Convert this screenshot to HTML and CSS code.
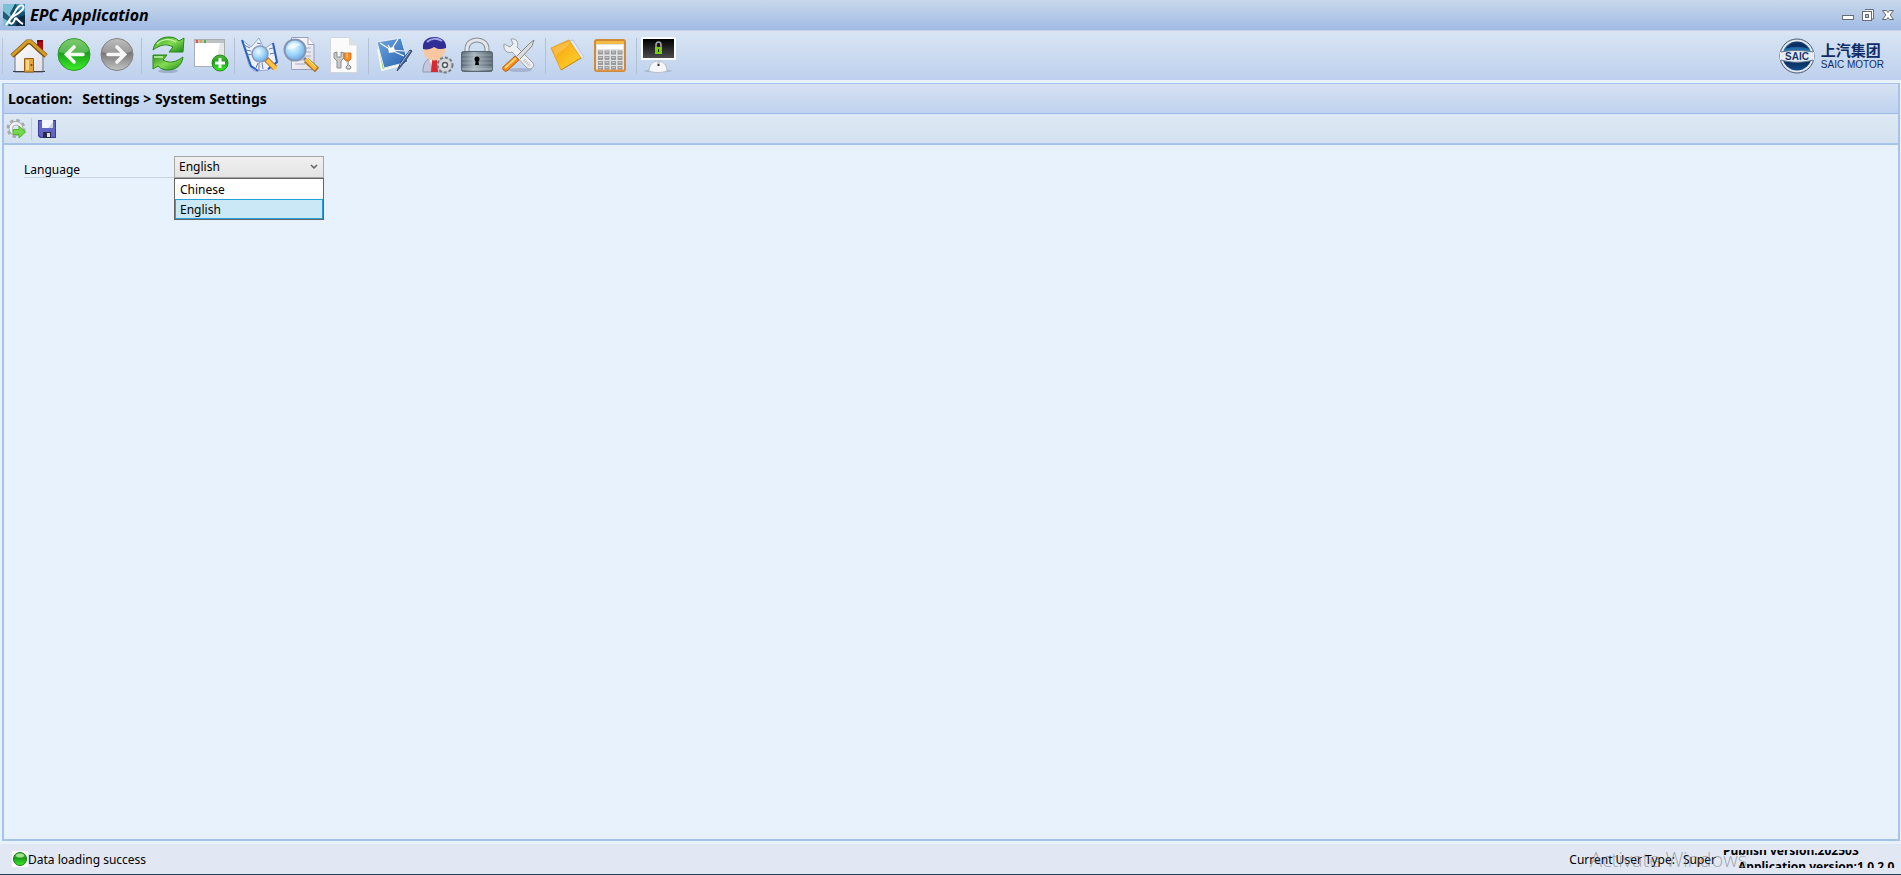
FILE: index.html
```html
<!DOCTYPE html>
<html lang="en">
<head>
  <meta charset="UTF-8" />
  <meta name="viewport" content="width=device-width, initial-scale=1.0"/>
  <title>EPC Application</title>
  <link rel="stylesheet" href="styles.css">
</head>
<body>
  <!-- shared gradients -->
  <svg class="defs" width="0" height="0" aria-hidden="true">
    <defs>
      <linearGradient id="green" x1="0" y1="0" x2="0" y2="1"><stop offset="0" stop-color="#58b83c"/><stop offset=".45" stop-color="#18a018"/><stop offset="1" stop-color="#3cf028"/></linearGradient>
      <linearGradient id="gray" x1="0" y1="0" x2="0" y2="1"><stop offset="0" stop-color="#a8a8a8"/><stop offset=".45" stop-color="#777"/><stop offset="1" stop-color="#c4c4c4"/></linearGradient>
      <linearGradient id="leaf" x1="0" y1="0" x2="1" y2="1"><stop offset="0" stop-color="#2c8c20"/><stop offset=".5" stop-color="#86dc50"/><stop offset="1" stop-color="#1c8a18"/></linearGradient>
      <linearGradient id="paper" x1="0" y1="0" x2="1" y2="1"><stop offset="0" stop-color="#fff"/><stop offset="1" stop-color="#dcdce6"/></linearGradient>
      <linearGradient id="blue" x1="0" y1="0" x2="1" y2="1"><stop offset="0" stop-color="#6ea6e0"/><stop offset="1" stop-color="#2860b0"/></linearGradient>
      <radialGradient id="lens" cx=".4" cy=".35" r=".7"><stop offset="0" stop-color="#f0fbff"/><stop offset=".5" stop-color="#a4d8fa"/><stop offset="1" stop-color="#62a4e6"/></radialGradient>
      <linearGradient id="steel" x1="0" y1="0" x2="1" y2="0"><stop offset="0" stop-color="#5c6a76"/><stop offset=".4" stop-color="#a4b2bc"/><stop offset="1" stop-color="#586670"/></linearGradient>
      <linearGradient id="gold" x1="0" y1="0" x2="1" y2="1"><stop offset="0" stop-color="#f79a10"/><stop offset="1" stop-color="#ffd92a"/></linearGradient>
      <linearGradient id="screen" x1="0" y1="0" x2="0" y2="1"><stop offset="0" stop-color="#000"/><stop offset="1" stop-color="#4c4c4c"/></linearGradient>
      <linearGradient id="globe" x1="0" y1="0" x2="0" y2="1"><stop offset="0" stop-color="#0c3064"/><stop offset=".35" stop-color="#2a80c0"/><stop offset=".6" stop-color="#08244c"/><stop offset="1" stop-color="#124a8c"/></linearGradient>
    </defs>
  </svg>

  <header class="titlebar">
    <svg class="app-icon" width="22" height="22" viewBox="0 0 22 22" aria-hidden="true">
      <rect width="22" height="22" fill="#16506c"/>
      <path d="M0 0h12L7 9l1 5-3 8H0z" fill="#7cc0d6"/>
      <path d="M0 7l7 6-2 4-5-3z" fill="#1e5c78"/>
      <path d="M13 0h9v8l-7-2z" fill="#3c92b4"/>
      <path d="M14 14l8-3v11h-9z" fill="#0c2a44"/>
      <path d="M3 21L12 8C14 3 18 0 20 2s-2 6-9 10c-3 2-6 5-4 7s4-1 5-4 3 3 8 5" fill="none" stroke="#fff" stroke-width="2"/>
    </svg>
    <h1>EPC Application</h1>
    <div class="window-buttons">
      <button type="button" aria-label="Minimize"><svg width="14" height="14" viewBox="0 0 14 14"><rect x="1.500" y="7.500" width="11" height="4" fill="#fff" stroke="#666b78"/></svg></button>
      <button type="button" aria-label="Restore"><svg width="14" height="14" viewBox="0 0 14 14"><path d="M4 1.500h8.500V11H10" fill="#fff" stroke="#666b78"/><rect x="1.500" y="3.500" width="9" height="9" fill="#fff" stroke="#666b78"/><rect x="4.500" y="6.500" width="3" height="3" fill="#b2c7e6" stroke="#666b78"/></svg></button>
      <button type="button" aria-label="Close"><svg width="14" height="14" viewBox="0 0 14 14"><path d="M1.500 2.500h4L7 4.500l1.500-2h4L9.200 7l3.300 4.500h-4L7 9.500l-1.500 2h-4L4.800 7z" fill="#fff" stroke="#666b78"/></svg></button>
    </div>
  </header>

  <nav class="toolbar" aria-label="Main toolbar">
    <span class="grip"></span>
    <button type="button" class="tool" aria-label="Home">
      <svg width="43" height="40" viewBox="0 0 43 40">
        <path d="M27 4h6v14h-6z" fill="#a80c14"/><path d="M27 4h6v2h-6z" fill="#760408"/>
        <path d="M5 20L19 7l14 13v16H5z" fill="url(#paper)" stroke="#70747c"/>
        <path d="M3 35h32v1H3z" fill="#3c4048"/>
        <path d="M2 20L17.500 6h3L36 20" fill="none" stroke="#805810" stroke-width="5"/>
        <path d="M2 19.500L17.500 5.500h3L36 19.500" fill="none" stroke="#d69d26" stroke-width="3"/>
        <path d="M14.500 22.500h9V36h-9z" fill="#e4a53c" stroke="#98610c"/><path d="M16 24h3v10h-3z" fill="#f7d486"/><circle cx="21.500" cy="29" r="1" fill="#694000"/>
      </svg>
    </button>
    <button type="button" class="tool" aria-label="Back">
      <svg width="43" height="40" viewBox="0 0 43 40">
        <circle cx="21" cy="18.500" r="16" fill="url(#green)" stroke="#2d9a2b"/>
        <path d="M6 16C8 6 15 3 21 3s13 4 15 12c-9 5-20 4-30 1z" fill="#fff" opacity=".25"/>
        <path d="M30 18.500H14M21 11l-7.500 7.500L21 26" fill="none" stroke="#f4fff0" stroke-width="3.600" stroke-linecap="round"/>
      </svg>
    </button>
    <button type="button" class="tool" aria-label="Forward">
      <svg width="43" height="40" viewBox="0 0 43 40">
        <circle cx="21" cy="18.500" r="16" fill="url(#gray)" stroke="#828282"/>
        <path d="M6 16C8 6 15 3 21 3s13 4 15 12c-9 5-20 4-30 1z" fill="#fff" opacity=".25"/>
        <path d="M12 18.500h16M21 11l7.500 7.500L21 26" fill="none" stroke="#f6f6f6" stroke-width="3.600" stroke-linecap="round"/>
      </svg>
    </button>
    <span class="sep"></span>
    <button type="button" class="tool wide" aria-label="Refresh">
      <svg width="43" height="40" viewBox="0 0 43 40">
        <ellipse cx="24" cy="35" rx="10" ry="2" fill="#8599b5" opacity=".6"/>
        <path d="M9 14C11 4 18 1 25 1c4 0 7 1 10 4l5-3-1 14H25l4-5c-7-4-13-2-20 3z" fill="url(#leaf)" stroke="#25891b"/>
        <path d="M39 21c-1 9-8 13-15 13-4 0-7-1-10-4l-5 3V19h14l-4 5c7 4 13 2 20-3z" fill="url(#leaf)" stroke="#25891b"/>
        <path d="M13 8c5-5 13-6 19-2M10 21h9" fill="none" stroke="#c7f6a6" stroke-width="1.500"/>
      </svg>
    </button>
    <button type="button" class="tool wide" aria-label="New window">
      <svg width="43" height="40" viewBox="0 0 43 40">
        <rect x="6.500" y="3.500" width="30" height="27" fill="#fff" stroke="#aaaeb3"/>
        <path d="M7 4h29v3H7z" fill="#bfc2c4"/><path d="M8 4h2v3H8z" fill="#ed5049"/><path d="M12 4h2v3h-2z" fill="#ee9b41"/><path d="M16 4h2v3h-2z" fill="#48b748"/>
        <path d="M32 7h4v23h-9z" fill="#e5e8ea"/>
        <circle cx="32" cy="27" r="8" fill="url(#green)" stroke="#278d19"/>
        <path d="M32 22v10M27 27h10" stroke="#fff" stroke-width="3"/>
      </svg>
    </button>
    <span class="sep"></span>
    <button type="button" class="tool" aria-label="Catalog search">
      <svg width="43" height="40" viewBox="0 0 43 40">
        <path d="M5 4l9 7 8-9 5 11 9-6 4 19-9 8-14 1-5-6z" fill="#edf2ff" stroke="#95a7d5"/>
        <path d="M5 4l9 26 7 5M36 7l4 19-9 7" fill="none" stroke="#275ec3" stroke-width="2"/>
        <path d="M7 9l6 3M9 14l5 1M10 19l5-1M20 7l4 1M18 34l3-7M22 34v-7M26 33l-1-6M32 13l4-1M33 18l4-1" stroke="#6977a4"/>
        <path d="M29 23l9 9" stroke="#a46a20" stroke-width="6"/><path d="M30 24l9 9" stroke="#ffc243" stroke-width="4"/>
        <circle cx="23" cy="18" r="8" fill="url(#lens)" stroke="#8a99b7" stroke-width="1.500"/>
      </svg>
    </button>
    <button type="button" class="tool" aria-label="Document search">
      <svg width="43" height="40" viewBox="0 0 43 40">
        <path d="M11.500 1.500H28l6 7v25H11.500z" fill="url(#paper)" stroke="#9a9dbd"/>
        <path d="M28 1.500v7h6" fill="#fff" stroke="#9a9dbd"/>
        <path d="M15 12h16M15 16h16M15 20h16M15 24h15M15 28h10" stroke="#a8abc7"/>
        <path d="M24 22l3 3" stroke="#71809d" stroke-width="3"/><path d="M26 24l11 10" stroke="#a96a1b" stroke-width="6"/><path d="M26 23l10 10" stroke="#ffbd36" stroke-width="4"/><path d="M27 22l9 9" stroke="#fff0a2"/>
        <circle cx="15" cy="14" r="10.500" fill="url(#lens)" stroke="#8496b5" stroke-width="2"/>
        <path d="M7 13c2-7 10-8 14-4-4 1-8 5-14 4z" fill="#fff" opacity=".55"/>
      </svg>
    </button>
    <button type="button" class="tool" aria-label="Service document">
      <svg width="43" height="40" viewBox="0 0 43 40">
        <path d="M7.500 1.500H26l8 8v27H7.500z" fill="#fbfbfb" stroke="#d3d6dc"/><path d="M26 1.500l8 8h-8z" fill="#dcdfe3"/>
        <path d="M11 17v5l3 3v7h4v-7l3-3v-5l-3-1v5h-4v-5z" fill="#c7c9cc" stroke="#8b8e93"/>
        <path d="M21 17h7v6l-2 2h-3l-2-2z" fill="#f18b20" stroke="#d0792e"/><path d="M24 17v6" stroke="#ffcf85"/><path d="M25 25v4l-2 2 1 2h3l1-2-2-2" fill="#ddd" stroke="#777a80"/>
      </svg>
    </button>
    <span class="sep"></span>
    <button type="button" class="tool" aria-label="Drawing">
      <svg width="43" height="40" viewBox="0 0 43 40">
        <path d="M7 13l4 21 22-6" fill="#80c83a" stroke="#f4fae9" stroke-width="2"/>
        <path d="M6 6l24-4 7 24-24 6z" fill="url(#blue)" stroke="#e6f0f9"/>
        <path d="M9 7l11 7 13 6M20 14l7-11M20 14l-3-5M33 15l-13-1" fill="none" stroke="#fff" stroke-width="1.200"/><path d="M17 12l6-1 1 5-6 1z" fill="#fff"/>
        <path d="M26 35l4-9 9-12 2 1-8 12z" fill="#466394" stroke="#334866"/><path d="M29 29L39 15" stroke="#a9c2e9"/>
      </svg>
    </button>
    <button type="button" class="tool" aria-label="User settings">
      <svg width="43" height="40" viewBox="0 0 43 40">
        <path d="M9 36c0-9 3-14 11-14s13 5 13 14z" fill="#c5c8da" stroke="#9497ad"/>
        <path d="M15 22l5 14 6-14z" fill="#fff"/><path d="M18 24h5l1 12h-7z" fill="#dc2731"/>
        <ellipse cx="20" cy="13.500" rx="11" ry="11" fill="#f7c7a2"/>
        <path d="M9 13C8 4 14 1 21 1s12 5 11 11c-5 2-9 1-12-1-3 2-7 3-11 2z" fill="#302e95"/><path d="M13 6c4-4 10-4 15-1" stroke="#a2a3e5" stroke-width="2" fill="none"/>
        <circle cx="31" cy="29" r="7.500" fill="#c2c6ca" stroke="#777d85" stroke-width="2" stroke-dasharray="3 2"/><circle cx="31" cy="29" r="6" fill="#d5d8db"/><circle cx="31" cy="29" r="2.500" fill="#eef4fb" stroke="#555b64" stroke-width="1.500"/>
      </svg>
    </button>
    <button type="button" class="tool" aria-label="Lock">
      <svg width="43" height="40" viewBox="0 0 43 40">
        <path d="M10 16v-3c0-12 20-12 20 0v3" fill="none" stroke="#858e96" stroke-width="5"/><path d="M10 16v-3c0-12 20-12 20 0v3" fill="none" stroke="#e2e6e8" stroke-width="3"/>
        <rect x="4.500" y="15.500" width="31" height="20" rx="2" fill="url(#steel)" stroke="#5b6770"/>
        <path d="M5 19h30M5 23h30M5 27h30M5 31h30" stroke="#d8e1e7" opacity=".35"/><path d="M5 33h30" stroke="#c2ccd1"/>
        <circle cx="20" cy="23" r="2.500"/><path d="M19 23h2l1 6h-4z"/>
      </svg>
    </button>
    <button type="button" class="tool" aria-label="Tools">
      <svg width="43" height="40" viewBox="0 0 43 40">
        <ellipse cx="20" cy="34" rx="12" ry="2" fill="#8da0bd" opacity=".6"/>
        <path d="M4 8l6 3 3-3-2-5c6-1 8 4 6 8l15 15c4 3 0 9-5 6L12 16C7 18 3 14 4 8z" fill="#edf0f2" stroke="#9b9fa4"/>
        <path d="M24 24l6 6" stroke="#b5babf" stroke-width="3" stroke-dasharray="1 1"/>
        <path d="M17 20L30 7l4-3-2 6-12 13" fill="#ddd" stroke="#82868b"/>
        <path d="M15 20l4 4L7 35c-3 1-5-2-4-4z" fill="#f58c16" stroke="#b4631d"/><path d="M5 32l11-10" stroke="#ffd477" stroke-width="2"/>
      </svg>
    </button>
    <span class="sep"></span>
    <button type="button" class="tool" aria-label="Notes">
      <svg width="43" height="40" viewBox="0 0 43 40">
        <path d="M18 6l7-2 11 17-3 2-16 4z" fill="#e2e8f4" stroke="#b7c4db"/>
        <path d="M3 12l18-8 12 18-20 12z" fill="url(#gold)" stroke="#e5a528" stroke-linejoin="round"/>
        <path d="M8 21c1-4 4-5 8-8 3-2 5-4 6-8L4 12z" fill="#fff" opacity=".2"/><path d="M13 34l20-12" stroke="#cc8926"/>
      </svg>
    </button>
    <button type="button" class="tool" aria-label="Calculator">
      <svg width="43" height="40" viewBox="0 0 43 40">
        <rect x="4" y="4" width="30" height="31" rx="2" fill="#e2e2e2" stroke="#d08a38" stroke-width="2"/>
        <path d="M5 5h28v3H5z" fill="#f3bc41"/><path d="M6 9h26v4H6z" fill="#fff"/>
        <path d="M7 16.500h25M7 22h25M7 27h25M7 32h25" stroke="#999b9d" stroke-width="4" stroke-dasharray="5 1.500"/>
        <path d="M8 16h24M8 21.500h24M8 26.500h24M8 31.500h24" stroke="#c9cacb" stroke-width="1" stroke-dasharray="3 3.500"/>
        <path d="M5 34h28" stroke="#eb9f62"/>
      </svg>
    </button>
    <span class="sep"></span>
    <button type="button" class="tool" aria-label="Lock screen">
      <svg width="43" height="40" viewBox="0 0 43 40">
        <ellipse cx="19" cy="35" rx="14" ry="1.500" fill="#91a3bd" opacity=".6"/>
        <path d="M10 35c0-6 4-10 9-10s9 4 9 10c-5 2-13 2-18 0z" fill="#f6f7f9" stroke="#b9bec9"/><path d="M18 24h3v6h-3z" fill="#c7ccd5"/><circle cx="19.500" cy="29" r="1" fill="#222"/>
        <path d="M2 1h35v23H2z" fill="#fafcff"/><path d="M4 3h31v19H4z" fill="url(#screen)"/>
        <path d="M17 12V9c0-4 5-4 5 0v3" fill="none" stroke="#aaa" stroke-width="1.500"/><path d="M16 11h7v7h-7z" fill="#79cf0c"/><path d="M19 13h1v3h-1z" fill="#172b00"/>
      </svg>
    </button>

    <div class="brand">
      <svg width="36" height="36" viewBox="0 0 36 36" aria-hidden="true">
        <circle cx="18" cy="18" r="17" fill="#e4e8ee" stroke="#465a70"/>
        <circle cx="18" cy="18" r="14.500" fill="url(#globe)"/>
        <path d="M6 11C12 3 25 3 30 11c-7-3-17-3-24 0z" fill="#0a3063"/>
        <path d="M1 14c11-2 23-2 34 0v8c-11 3-23 3-34 0z" fill="#e9edf3"/>
        <path d="M2 14c11-2 21-2 32 0M2 22c11 3 21 3 32 0" fill="none" stroke="#5d7896"/>
        <text x="18" y="22" text-anchor="middle" class="brand-mark">SAIC</text>
      </svg>
      <div class="brand-name">
        <strong lang="zh-CN">上汽集团</strong>
        <span>SAIC MOTOR</span>
      </div>
    </div>
  </nav>

  <main class="panel">
    <h2 class="location"><span>Location:</span><span>Settings &gt; System Settings</span></h2>

    <div class="actions">
      <button type="button" aria-label="Apply">
        <svg width="20" height="20" viewBox="0 0 20 20">
          <circle cx="10" cy="9.500" r="8" fill="none" stroke="#a6a9ae" stroke-width="3" stroke-dasharray="3.500 2.780"/>
          <circle cx="10" cy="9.500" r="7" fill="#f0f2f5" stroke="#a6a9ae"/><circle cx="10" cy="9.500" r="3.500" fill="#dde8f3" stroke="#acb0b5"/>
          <path d="M7 10.500h6V7l6.500 6-6.500 6v-3.500H7z" fill="#74d84b" stroke="#4ab82d"/>
        </svg>
      </button>
      <span class="action-sep"></span>
      <button type="button" aria-label="Save">
        <svg width="18" height="18" viewBox="0 0 18 18">
          <path d="M0 0h18v18H2l-2-2z" fill="#3d3b9f"/><path d="M1 1h16v16H3l-2-2z" fill="#6266c3"/>
          <path d="M4 0h11v8H4z" fill="#f3f5fd"/><path d="M10 8l5-6v6z" fill="#cbd4e7"/>
          <path d="M5 12h8v6H5z" fill="#292b49"/><path d="M9 13h3v4H9z" fill="#dbe0e5"/>
        </svg>
      </button>
    </div>

    <form class="settings">
      <label for="language">Language</label>
      <div class="combo">
        <select id="language" name="language">
          <option>Chinese</option>
          <option selected>English</option>
        </select>
        <svg class="chevron" width="8" height="6" viewBox="0 0 8 6" aria-hidden="true"><path d="M1 1l3 3 3-3" fill="none" stroke="#606060" stroke-width="1.500"/></svg>
        <ul class="options" role="listbox" aria-label="Language">
          <li role="option" aria-selected="false">Chinese</li>
          <li role="option" aria-selected="true">English</li>
        </ul>
      </div>
    </form>
  </main>

  <footer class="statusbar">
    <svg class="status-light" width="16" height="16" viewBox="0 0 16 16" aria-hidden="true">
      <rect width="16" height="16" fill="#fff"/>
      <circle cx="8" cy="8" r="6.500" fill="url(#green)" stroke="#167516"/>
      <ellipse cx="8" cy="4.500" rx="4" ry="2" fill="#d0f7bf" opacity=".7"/>
    </svg>
    <span>Data loading success</span>
    <div class="user-type"><span>Current User Type:</span><span>Super</span></div>
    <div class="versions">
      <p>Publish version:202503</p>
      <p>Application version:1.0.2.0</p>
    </div>
    <span class="watermark">Activate Windows</span>
  </footer>
</body>
</html>
```

FILE: styles.css
```css
* {
  box-sizing: border-box;
}

body {
  margin: 0;
  min-height: 100vh;
  display: flex;
  flex-direction: column;
  background: #e8f2fd;
  color: #000;
  font-family: "Noto Sans", "Noto Sans CJK SC", sans-serif;
  font-size: 12px;
}

h1, h2, p, ul {
  margin: 0;
  padding: 0;
}

button {
  padding: 0;
  border: 0;
  background: none;
  cursor: pointer;
}

svg {
  display: block;
}

.defs {
  position: absolute;
}

/* title bar */
.titlebar {
  display: flex;
  align-items: center;
  height: 30px;
  padding: 0 6px 0 3px;
  background: linear-gradient(#c8d8ec, #b5cae7 50%, #9fbae5);
}

.titlebar h1 {
  margin-left: 5px;
  font-size: 16px;
  font-style: italic;
  font-weight: bold;
}

.window-buttons {
  display: flex;
  gap: 6px;
  margin-left: auto;
}

/* main toolbar */
.toolbar {
  display: flex;
  align-items: center;
  height: 50px;
  border-top: 1px solid #c7d3e3;
  padding-right: 17px;
  background: linear-gradient(#d9e5f4, #bdd0ed);
}

.grip {
  width: 10px;
  height: 36px;
  border-left: 2px solid transparent;
  background: linear-gradient(#b8c5d8, #b8c5d8) 0 0 / 1px 100% no-repeat;
}

.tool {
  width: 43px;
}

.tool.wide {
  width: 44px;
}

.sep {
  width: 1px;
  height: 36px;
  margin: 0 2px;
  background: #b2c0d5;
}

.brand {
  display: flex;
  align-items: center;
  gap: 6px;
  margin-left: auto;
  color: #102c68;
}

.brand-mark {
  font: bold 10px "Liberation Sans", sans-serif;
  fill: #17396e;
}

.brand-name {
  display: flex;
  flex-direction: column;
}

.brand-name strong {
  font: bold 15px/18px "Noto Sans CJK SC", sans-serif;
}

.brand-name span {
  font: 10px/12px "Liberation Sans", sans-serif;
}

/* page panel */
.panel {
  flex: 1;
  display: flex;
  flex-direction: column;
  margin: 3px 1px 3px 2px;
  border: 2px solid #a5c3ec;
  border-top-width: 1px;
}

.location {
  display: flex;
  align-items: center;
  gap: 10px;
  height: 30px;
  padding-left: 4px;
  border-bottom: 1px solid #99b9e5;
  background: linear-gradient(#d7e3f3, #bed1ee);
  font-size: 14px;
  font-weight: bold;
}

.actions {
  display: flex;
  align-items: center;
  height: 31px;
  padding-left: 2px;
  border-bottom: 2px solid #a5c3ec;
  background: linear-gradient(#dfe9f5, #d4e1ef);
}

.action-sep {
  width: 1px;
  height: 22px;
  margin: 0 6px 0 5px;
  background: #bdcbdc;
}

/* settings form */
.settings {
  display: flex;
  align-items: flex-start;
  padding: 11px 20px;
}

.settings label {
  width: 150px;
  height: 22px;
  padding-top: 5px;
  border-bottom: 1px solid #c5d2e0;
  line-height: 18px;
}

.combo {
  position: relative;
  width: 150px;
}

.combo select {
  display: block;
  width: 100%;
  height: 22px;
  padding: 0 4px 2px;
  border: 1px solid #a6a6a6;
  border-radius: 0;
  appearance: none;
  background: linear-gradient(#f0f0f0, #e4e4e4);
  color: #000;
  font: inherit;
}

.chevron {
  position: absolute;
  top: 8px;
  right: 6px;
  pointer-events: none;
}

.options {
  position: absolute;
  top: 100%;
  left: 0;
  width: 100%;
  border: 1px solid #646464;
  background: #fff;
  list-style: none;
}

.options li {
  height: 20px;
  padding: 0 4px;
  border: 1px solid transparent;
  line-height: 20px;
}

.options li[aria-selected="true"] {
  border-color: #26a0da;
  background: #cbe8f6;
}

/* status bar */
.statusbar {
  position: relative;
  display: flex;
  align-items: center;
  height: 31px;
  padding: 0 4px 0 12px;
  border-bottom: 1px solid #1c4257;
  background: #e1e8f4;
}

.user-type {
  display: flex;
  gap: 8px;
  margin-left: auto;
}

.versions {
  display: flex;
  flex-direction: column;
  justify-content: center;
  width: 174px;
  height: 18px;
  margin-left: 7px;
  overflow: hidden;
  font-weight: bold;
  white-space: nowrap;
}

.versions p {
  flex: none;
  line-height: 16px;
}

.versions p + p {
  padding-left: 15px;
}

.watermark {
  position: absolute;
  right: 154px;
  color: rgba(120, 120, 120, 0.6);
  font-family: "Open Sans", sans-serif;
  font-size: 20px;
  font-weight: 300;
  pointer-events: none;
}
```
